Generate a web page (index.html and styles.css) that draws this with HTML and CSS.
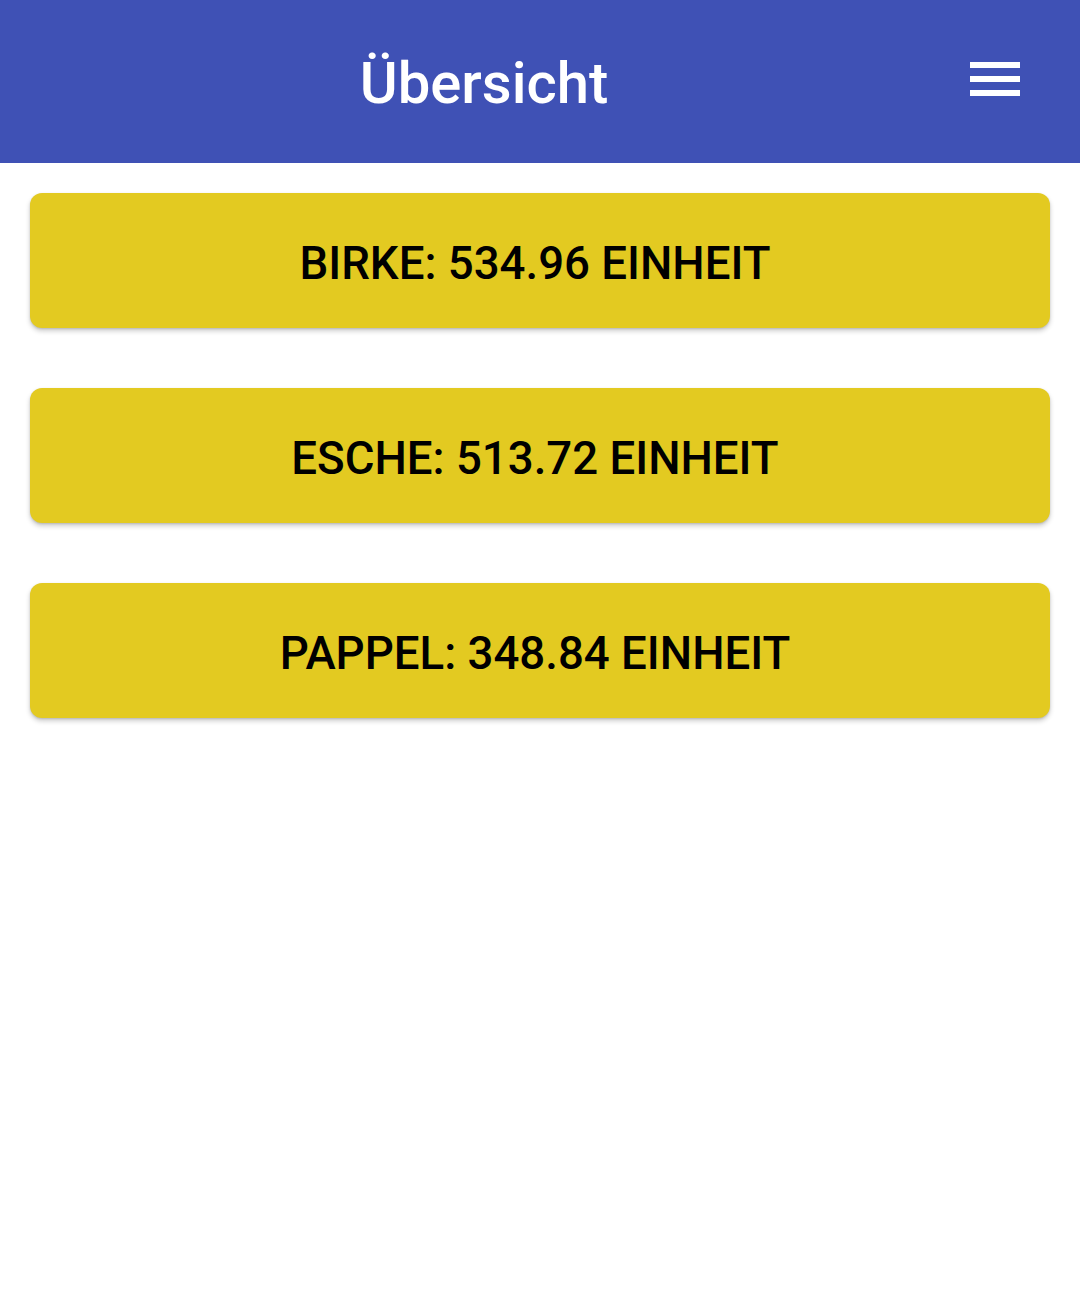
FILE: index.html
```html
<!DOCTYPE html>
<html lang="de">
<head>
<meta charset="utf-8">
<title>Übersicht</title>
<link rel="stylesheet" href="styles.css">
</head>
<body>
<header class="appbar">
  <h1 class="appbar-title">Übersicht</h1>
  <button class="menu-btn" aria-label="Menü">
    <svg width="50" height="34" viewBox="0 0 50 34"><rect x="0" y="0" width="50" height="6" fill="#fff"/><rect x="0" y="14" width="50" height="6" fill="#fff"/><rect x="0" y="28" width="50" height="6" fill="#fff"/></svg>
  </button>
</header>
<main class="list">
  <button class="item">BIRKE: 534.96 EINHEIT</button>
  <button class="item">ESCHE: 513.72 EINHEIT</button>
  <button class="item">PAPPEL: 348.84 EINHEIT</button>
</main>
</body>
</html>
```
FILE: styles.css
```css
html, body {
  margin: 0;
  padding: 0;
  background: #ffffff;
  font-family: Roboto, "Noto Sans", sans-serif;
}
.appbar {
  height: 163px;
  background: #3F51B5;
  display: flex;
  align-items: center;
}
.appbar-title {
  flex: 1;
  margin: 0;
  text-align: center;
  color: #ffffff;
  font-size: 58px;
  font-weight: 500;
  line-height: 1;
  padding-top: 2px;
}
.menu-btn {
  width: 112px;
  height: 163px;
  padding: 0 60px 6px 2px;
  border: 0;
  background: transparent;
  display: flex;
  align-items: center;
  justify-content: flex-start;
  box-sizing: border-box;
}
.menu-btn svg { display: block; }
.list {
  padding: 30px 30px;
  display: flex;
  flex-direction: column;
  gap: 60px;
}
.item {
  height: 135px;
  border: 0;
  border-radius: 12px;
  background: #E3CA21;
  color: #000000;
  font-family: Roboto, "Noto Sans", sans-serif;
  font-size: 45.6px;
  font-weight: 500;
  box-shadow: 0 3px 5px rgba(0,0,0,0.2), 0 1px 2px rgba(0,0,0,0.12);
  display: flex;
  align-items: center;
  justify-content: center;
  padding: 5px 10px 0 0;
}
```
